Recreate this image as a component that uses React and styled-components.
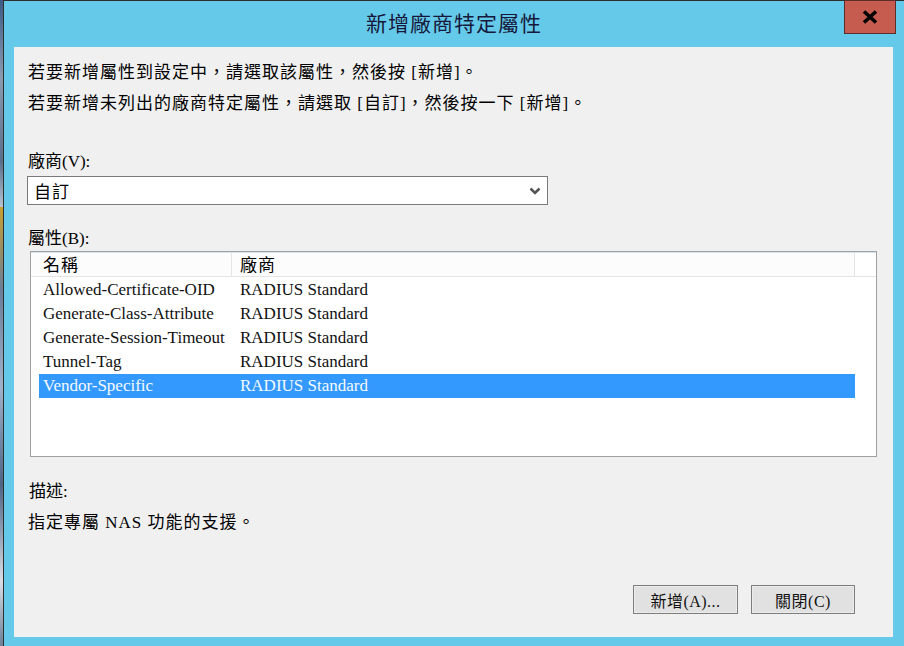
import React from "react";
import styled, { createGlobalStyle } from "styled-components";

const GlobalStyle = createGlobalStyle`
  html, body { margin: 0; padding: 0; }
  body {
    width: 904px;
    height: 646px;
    overflow: hidden;
    background: #2c3e52;
    font-family: "Noto Sans CJK TC", sans-serif;
  }
`;

const CJK = `"Liberation Serif", "Noto Sans CJK TC", serif`;

const Desktop = styled.div`
  display: flex;
  width: 904px;
  height: 646px;
`;

const DesktopStrip = styled.div`
  width: 3px;
  flex: none;
  background: linear-gradient(
    180deg,
    #3c5a86 0%,
    #8a9bb0 12%,
    #5a6f8c 25%,
    #b5c2d0 32%,
    #c8a030 30%,
    #6a7d99 45%,
    #9fb2c9 60%,
    #4d6485 75%,
    #d8dde4 90%,
    #6b7f97 100%
  );
`;

const Window = styled.div`
  flex: 1;
  min-width: 0;
  display: flex;
  flex-direction: column;
  background: #65c9ea;
  border-top: 1px solid #2e2e2e;
  border-left: 1px solid #2e2e2e;
`;

const TitleBar = styled.div`
  height: 46px;
  flex: none;
  display: grid;
  grid-template-columns: 1fr auto 1fr;
`;

const Title = styled.div`
  grid-column: 2;
  align-self: center;
  padding-bottom: 5px;
  font-family: "Noto Sans CJK TC", sans-serif;
  font-size: 21px;
  letter-spacing: 1px;
  color: #15183a;
`;

const CloseButton = styled.div`
  grid-column: 3;
  justify-self: end;
  align-self: start;
  margin-right: 8px;
  margin-top: -1px;
  width: 50px;
  height: 32px;
  background: #c65c50;
  border: 1px solid #5c2d2a;
  display: flex;
  align-items: center;
  justify-content: center;
`;

const Frame = styled.div`
  flex: 1;
  min-height: 0;
  display: flex;
  padding: 0 11px 9px 10px;
`;

const Panel = styled.div`
  flex: 1;
  min-width: 0;
  display: flex;
  flex-direction: column;
  background: #f0f0f0;
  padding: 9px 16px 23px 14px;
  color: #000;
`;

const Intro = styled.div`
  font-family: ${CJK};
  font-size: 17px;
  letter-spacing: 1px;
  line-height: 31px;
  padding-top: 1px;
  white-space: nowrap;
`;

const Label = styled.div`
  font-family: ${CJK};
  font-size: 17px;
  line-height: 20px;
  height: 20px;
  margin-top: ${(p) => p.$mt}px;
  margin-left: ${(p) => p.$ml || 0}px;
  white-space: nowrap;
`;

const Select = styled.div`
  margin-top: 4px;
  margin-left: -1px;
  width: 521px;
  height: 29px;
  box-sizing: border-box;
  background: #fff;
  border: 1px solid #7a7a7a;
  display: flex;
  align-items: center;
  justify-content: space-between;
  padding: 0 6px 0 6px;
  font-family: ${CJK};
  font-size: 17px;
  letter-spacing: 1px;
`;

const ListBox = styled.div`
  margin-top: 2px;
  margin-left: 2px;
  width: 847px;
  height: 206px;
  box-sizing: border-box;
  background: #fff;
  border: 1px solid #a0a0a0;
  display: flex;
  flex-direction: column;
`;

const Header = styled.div`
  display: flex;
  height: 25px;
  box-sizing: border-box;
  border-top: 1px solid #d6e5f3;
  border-bottom: 1px solid #e5e5e5;
  background: #fcfcfc;
`;

const HeaderCell = styled.div`
  width: ${(p) => p.$w}px;
  box-sizing: border-box;
  padding-left: ${(p) => p.$pl}px;
  border-right: 1px solid #e5e5e5;
  font-family: ${CJK};
  font-size: 17px;
  letter-spacing: 1px;
  line-height: 25px;
`;

const HeaderFill = styled.div`
  flex: 1;
  background: #fff;
`;

const Rows = styled.div`
  padding: 1px 0 0 8px;
  display: flex;
  flex-direction: column;
`;

const Row = styled.div`
  display: flex;
  width: 816px;
  height: 24px;
  align-items: center;
  background: ${(p) => (p.$selected ? "#3399ff" : "transparent")};
  color: ${(p) => (p.$selected ? "#f4f9ff" : "#111")};
  font-family: "Liberation Serif", serif;
  font-size: 17px;
  white-space: nowrap;
`;

const NameCell = styled.div`
  width: 201px;
  box-sizing: border-box;
  padding-left: 4px;
`;

const VendorCell = styled.div`
  flex: 1;
`;

const Description = styled.div`
  margin-top: 11px;
  font-family: ${CJK};
  font-size: 17px;
  letter-spacing: 1px;
  line-height: 20px;
  white-space: nowrap;
`;

const ButtonRow = styled.div`
  margin-top: auto;
  margin-right: 22px;
  display: flex;
  justify-content: flex-end;
  gap: 13px;
`;

const Button = styled.div`
  width: ${(p) => p.$w}px;
  height: 29px;
  box-sizing: border-box;
  background: #e1e1e1;
  border: 1px solid #7d7d7d;
  box-shadow: inset 0 0 0 1px #ececec;
  display: flex;
  align-items: center;
  justify-content: center;
  font-family: ${CJK};
  font-size: 16px;
  letter-spacing: 0.5px;
  color: #111;
`;

const rows = [
  ["Allowed-Certificate-OID", "RADIUS Standard"],
  ["Generate-Class-Attribute", "RADIUS Standard"],
  ["Generate-Session-Timeout", "RADIUS Standard"],
  ["Tunnel-Tag", "RADIUS Standard"],
  ["Vendor-Specific", "RADIUS Standard"],
];

export default function App() {
  return (
    <>
      <GlobalStyle />
      <Desktop>
        <DesktopStrip />
        <Window>
          <TitleBar>
            <Title>新增廠商特定屬性</Title>
            <CloseButton>
              <svg width="16" height="14" viewBox="0 0 16 14">
                <path d="M2 1.5 L14 12.5 M14 1.5 L2 12.5" stroke="#000" strokeWidth="3.6" fill="none" />
              </svg>
            </CloseButton>
          </TitleBar>
          <Frame>
            <Panel>
              <Intro>
                若要新增屬性到設定中，請選取該屬性，然後按 [新增]。
                <br />
                若要新增未列出的廠商特定屬性，請選取 [自訂]，然後按一下 [新增]。
              </Intro>
              <Label $mt={33}>廠商(V):</Label>
              <Select>
                <span>自訂</span>
                <svg width="12" height="8" viewBox="0 0 12 8">
                  <path d="M1.5 1.5 L6 6 L10.5 1.5" stroke="#555" strokeWidth="2.6" fill="none" />
                </svg>
              </Select>
              <Label $mt={24}>屬性(B):</Label>
              <ListBox>
                <Header>
                  <HeaderCell $w={201} $pl={12}>名稱</HeaderCell>
                  <HeaderCell $w={623} $pl={8}>廠商</HeaderCell>
                  <HeaderFill />
                </Header>
                <Rows>
                  {rows.map(([name, vendor], i) => (
                    <Row key={name} $selected={i === rows.length - 1}>
                      <NameCell>{name}</NameCell>
                      <VendorCell>{vendor}</VendorCell>
                    </Row>
                  ))}
                </Rows>
              </ListBox>
              <Label $mt={25} $ml={1}>描述:</Label>
              <Description>指定專屬 NAS 功能的支援。</Description>
              <ButtonRow>
                <Button $w={105}>新增(A)...</Button>
                <Button $w={104}>關閉(C)</Button>
              </ButtonRow>
            </Panel>
          </Frame>
        </Window>
      </Desktop>
    </>
  );
}
